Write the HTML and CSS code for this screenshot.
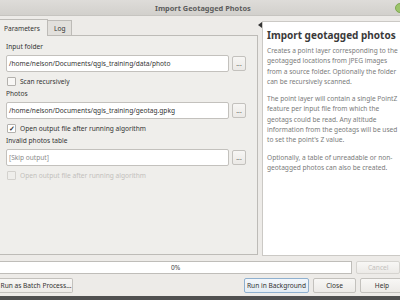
FILE: index.html
```html
<!DOCTYPE html>
<html>
<head>
  <title>Import Geotagged Photos</title>
  <link rel="stylesheet" href="styles.css">
</head>
<body>
  <div class="window">
    <div class="titlebar">
      <span class="title">Import Geotagged Photos</span>
      <span class="winbtn"></span>
    </div>

    <div class="main">
      <div class="left">
        <div class="tabs">
          <div class="tab active">Parameters</div>
          <div class="tab">Log</div>
        </div>
        <div class="panel">
          <div class="label">Input folder</div>
          <div class="field-row">
            <div class="input">/home/nelson/Documents/qgis_training/data/photo</div>
            <div class="dots">...</div>
          </div>
          <div class="check-row">
            <span class="box"></span>
            <span>Scan recursively</span>
          </div>

          <div class="label">Photos</div>
          <div class="field-row">
            <div class="input">/home/nelson/Documents/qgis_training/geotag.gpkg</div>
            <div class="dots">...</div>
          </div>
          <div class="check-row">
            <span class="box checked">&#10003;</span>
            <span>Open output file after running algorithm</span>
          </div>

          <div class="label">Invalid photos table</div>
          <div class="field-row">
            <div class="input placeholder">[Skip output]</div>
            <div class="dots">...</div>
          </div>
          <div class="check-row disabled">
            <span class="box"></span>
            <span>Open output file after running algorithm</span>
          </div>
        </div>
      </div>

      <div class="splitter">
        <svg width="4" height="6" viewBox="0 0 4 6"><polygon points="4,0 4,6 0,3" fill="#333"/></svg>
      </div>

      <div class="help">
        <h2>Import geotagged photos</h2>
        <p>Creates a point layer corresponding to the geotagged locations from JPEG images from a source folder. Optionally the folder can be recursively scanned.</p>
        <p>The point layer will contain a single PointZ feature per input file from which the geotags could be read. Any altitude information from the geotags will be used to set the point's Z value.</p>
        <p>Optionally, a table of unreadable or non-geotagged photos can also be created.</p>
      </div>
    </div>

    <div class="progress-row">
      <div class="progress">0%</div>
      <div class="btn btn-disabled">Cancel</div>
    </div>

    <div class="button-row">
      <div class="btn btn-batch">Run as Batch Process...</div>
      <div class="spacer"></div>
      <div class="btn btn-default">Run in Background</div>
      <div class="btn btn-close">Close</div>
      <div class="btn btn-help">Help</div>
    </div>

    <div class="taskbar"></div>
  </div>
</body>
</html>
```

FILE: styles.css
```css
html, body {
  margin: 0;
  padding: 0;
  width: 400px;
  height: 300px;
  overflow: hidden;
}

body {
  font-family: "Noto Sans", "Open Sans", sans-serif;
  font-size: 6.6px;
  color: #3c3c3c;
  background: #edebe8;
}

.window {
  display: flex;
  flex-direction: column;
  width: 400px;
  height: 300px;
}

/* title bar */
.titlebar {
  height: 16px;
  flex: none;
  display: flex;
  align-items: center;
  background: linear-gradient(#dedcd9, #d2d0cc);
  border-bottom: 1px solid #c6c4c0;
  box-sizing: border-box;
}

.title {
  padding-left: 155px;
  font-weight: bold;
  font-size: 7.4px;
  color: #5c5c5c;
}

.winbtn {
  margin-left: auto;
  margin-right: -5px;
  width: 8px;
  height: 8px;
  border-radius: 50%;
  background: #9cc46a;
  border: 1px solid #7fa851;
}

/* main split */
.main {
  display: flex;
  height: 241px;
  flex: none;
}

.left {
  width: 258px;
  flex: none;
  display: flex;
  flex-direction: column;
  padding-top: 3px;
}

.tabs {
  display: flex;
  height: 16px;
}

.tab {
  display: flex;
  align-items: center;
  padding: 0 8px 0 6px;
  background: #e2e0dc;
  border: 1px solid #bdbbb7;
  border-bottom: none;
  box-sizing: border-box;
  color: #333;
}

.tab.active {
  width: 48px;
  padding-left: 4px;
  background: #efeeeb;
  border-left: none;
  position: relative;
  z-index: 1;
  height: 17px;
}

.tab + .tab {
  width: 25px;
  margin-left: -1px;
  margin-top: 1px;
  height: 15px;
}

.panel {
  height: 220px;
  border: 1px solid #bdbbb7;
  border-left: none;
  background: #efeeeb;
  padding: 3px 0 0 6px;
  box-sizing: border-box;
}

.label {
  height: 10px;
  line-height: 10px;
  margin-top: 3px;
  color: #333;
}

.field-row {
  display: flex;
  align-items: center;
  margin-top: 3px;
  height: 17px;
}

.input {
  width: 223px;
  height: 17px;
  box-sizing: border-box;
  background: #fff;
  border: 1px solid #c3c1bd;
  border-radius: 2px;
  padding-left: 2px;
  line-height: 15px;
  color: #333;
}

.input.placeholder {
  color: #8a8a8a;
}

.dots {
  margin-left: 3px;
  width: 14px;
  height: 15px;
  box-sizing: border-box;
  border: 1px solid #c3c1bd;
  border-radius: 2px;
  background: linear-gradient(#f7f6f4, #ebe9e6);
  text-align: center;
  line-height: 13px;
  color: #555;
}

.check-row {
  display: flex;
  align-items: center;
  height: 10px;
  margin-top: 4px;
  margin-left: 1px;
  color: #333;
}

.box {
  width: 7px;
  height: 7px;
  border: 1px solid #b3b1ad;
  border-radius: 1px;
  background: #f8f7f5;
  margin-right: 4px;
  font-size: 7px;
  line-height: 7px;
  text-align: center;
  font-weight: bold;
  color: #333;
}

.box.checked {
  background: #fff;
}

.check-row.disabled {
  color: #c2c0bc;
}

.check-row.disabled .box {
  border-color: #d3d1cd;
  background: #efeeeb;
}

/* splitter */
.splitter {
  width: 4px;
  flex: none;
  padding-top: 6px;
  display: flex;
  justify-content: center;
  align-items: flex-start;
}

/* help panel */
.help {
  width: 145px;
  flex: none;
  margin-top: 5px;
  height: 235px;
  box-sizing: border-box;
  background: #fff;
  border: 1px solid #cbc9c5;
  padding: 5px 4px 0 4px;
  color: #7a7a7a;
}

.help h2 {
  margin: 0 0 3px 0;
  font-size: 10px;
  line-height: 16px;
  color: #3a3a3a;
}

.help p {
  margin: 0 0 7px 0;
  line-height: 10.3px;
}

/* bottom rows */
.progress-row {
  display: flex;
  margin-top: 4px;
  height: 13px;
}

.progress {
  width: 356px;
  box-sizing: border-box;
  background: #fff;
  border: 1px solid #bfbdb9;
  border-left: none;
  text-align: center;
  line-height: 11px;
  color: #444;
}

.btn {
  height: 15px;
  box-sizing: border-box;
  border: 1px solid #c3c1bd;
  border-radius: 2px;
  background: linear-gradient(#f8f7f5, #eceae7);
  text-align: center;
  line-height: 13px;
  color: #333;
}

.btn-disabled {
  margin-left: 4px;
  width: 44px;
  height: 13px;
  line-height: 11px;
  color: #c4c2be;
  border-color: #d6d4d0;
}

.button-row {
  display: flex;
  margin-top: 4px;
  height: 16px;
}

.btn-batch {
  width: 73px;
  border-left: none;
  border-radius: 0 2px 2px 0;
}

.spacer {
  flex: 1;
}

.btn-default {
  width: 65px;
  border-color: #8fb0cf;
  background: linear-gradient(#f3f7fb, #e4ecf3);
}

.btn-close {
  width: 43px;
  margin-left: 4px;
}

.btn-help {
  width: 44px;
  margin-left: 4px;
  margin-right: -4px;
}

.taskbar {
  margin-top: auto;
  height: 4px;
  background: #505050;
}
```
